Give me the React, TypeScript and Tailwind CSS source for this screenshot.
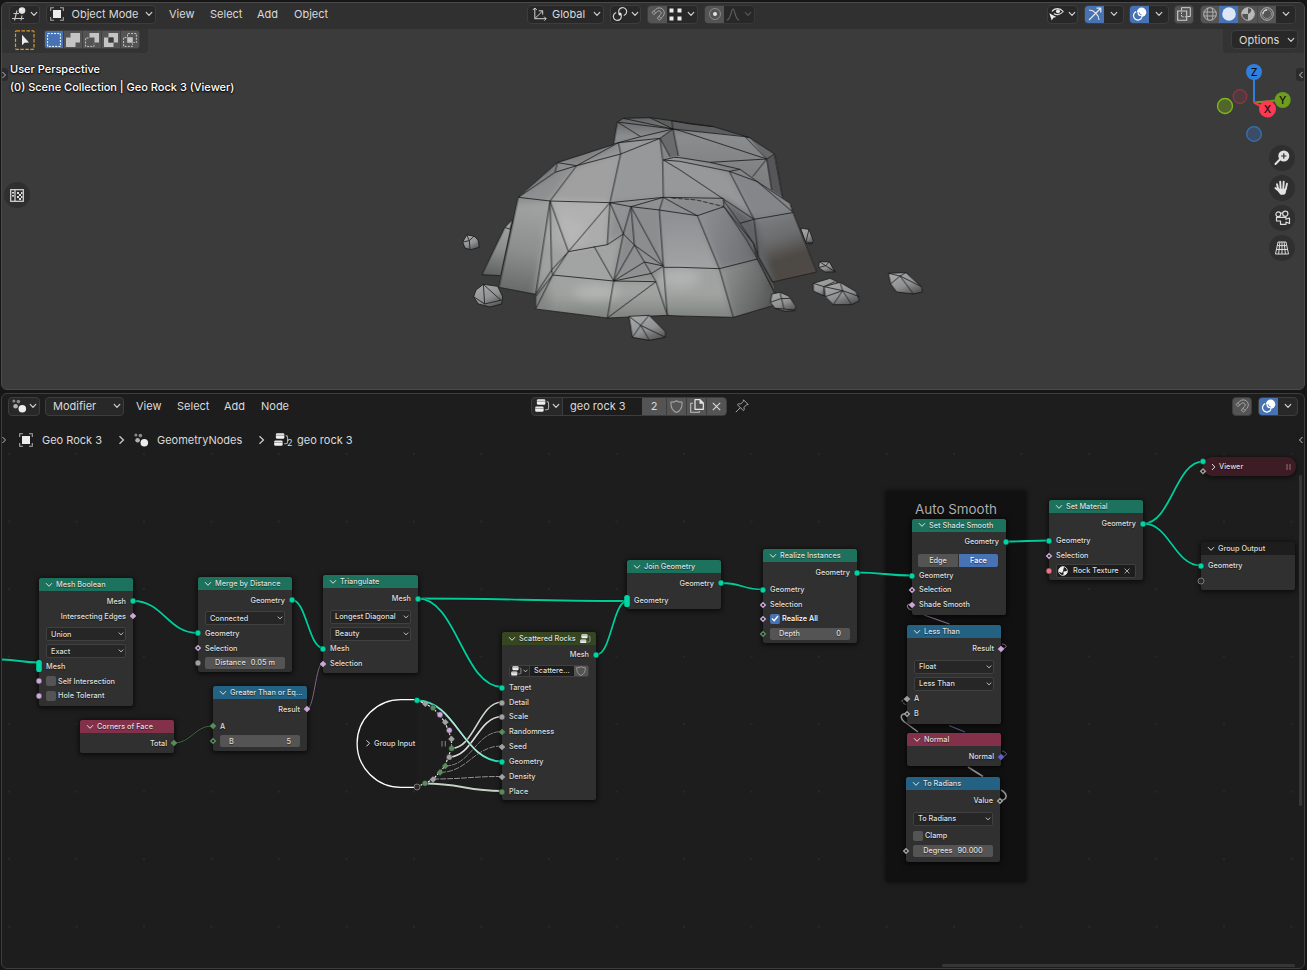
import React from "react";

type Kids = { children?: React.ReactNode };

/* ---------- small icons ---------- */

function Svg({ w = 16, h = 16, vb, className = "", children }: Kids & { w?: number; h?: number; vb?: string; className?: string }) {
  return (
    <svg width={w} height={h} viewBox={vb ?? `0 0 ${w} ${h}`} fill="none" className={`shrink-0 ${className}`}>
      {children}
    </svg>
  );
}

const Chevron = ({ color = "#d0d0d0" }: { color?: string }) => (
  <Svg w={8} h={6}>
    <path d="M1.200 1.400 4 4.300 6.800 1.400" stroke={color} strokeWidth="1.200" strokeLinecap="round" strokeLinejoin="round" />
  </Svg>
);

const Viewport3DIcon = () => (
  <Svg>
    <path d="M2.500 7.500H8M1 12.500H13M6 4.500 3.500 14.500M11 9.500 10 14.500" stroke="#c4c4c4" strokeWidth="1.100" />
    <circle cx="11" cy="4.600" r="3.300" fill="#e4e4e4" />
    <circle cx="9.900" cy="3.500" r="1" fill="#fff" />
  </Svg>
);

const ObjectIcon = () => (
  <Svg w={14} h={14}>
    <path d="M4 .7H.7V4M10 .7h3.300V4M4 13.300H.7V10M10 13.300h3.300V10" stroke="#a8a8a8" strokeWidth="1.100" />
    <rect x="3" y="3" width="8" height="8" fill="#ececec" />
  </Svg>
);

const NodesIcon = () => (
  <Svg w={15} h={14}>
    <circle cx="10.300" cy="9.800" r="3.800" fill="#ececec" />
    <circle cx="3.600" cy="7.200" r="2.300" fill="#b0b0b0" />
    <circle cx="1.900" cy="2.100" r="1.500" fill="#8a8a8a" />
    <circle cx="6.400" cy="2.600" r="1.800" fill="#8a8a8a" />
  </Svg>
);

const TreeIcon = ({ w = 16 }: { w?: number }) => (
  <Svg w={w} h={(w * 14) / 16} vb="0 0 16 14">
    <rect x="2" y=".3" width="9" height="5.800" rx="1.400" fill="#f0f0f0" />
    <path d="M2 2.400h9" stroke="#555" strokeWidth=".6" />
    <rect x=".2" y="7.900" width="9" height="5.800" rx="1.400" fill="#f0f0f0" />
    <path d="M.2 10h9" stroke="#555" strokeWidth=".6" />
    <path d="M12.500 2.800a2 2 0 0 1 2 2v4.700a2 2 0 0 1-2 2H10.800" stroke="#b0b0b0" strokeWidth="1.100" />
  </Svg>
);

const MagnetIcon = () => (
  <Svg w={14} h={14}>
    <path d="M1 5.400 4.600 2.400a5 5 0 0 1 7.300 7L8.500 13.200 6.200 11.200 9.700 7.400a2.200 2.200 0 0 0-3.200-3L2.900 7.600Z" stroke="#a4a4a4" strokeWidth="1" strokeLinejoin="round" />
    <path d="M2.800 3.900 4.800 6M8 9.300l2.300 2" stroke="#a4a4a4" strokeWidth=".9" />
  </Svg>
);

const OverlayIcon = () => (
  <Svg w={15} h={14}>
    <circle cx="9.600" cy="5.200" r="4.700" fill="#fff" />
    <path d="M4.200 4.600a4.400 4.400 0 1 0 5.800 5.700" stroke="#fff" strokeWidth="1.200" />
    <path d="M5.200 5.300a3 3 0 0 0 4 4" stroke="#4772b3" strokeWidth="1" />
    <path d="M7 5.200a2.600 2.600 0 0 0 2.600 2.600" stroke="#4772b3" strokeWidth=".8" />
  </Svg>
);

const ShieldIcon = ({ s = 13 }: { s?: number }) => (
  <Svg w={s} h={s} vb="0 0 13 13">
    <path d="M6.500.7C5 1.900 3 2.200.9 2.100.7 7.500 2.700 11 6.500 12.400c3.800-1.400 5.800-4.900 5.600-10.300C10 2.200 8 1.900 6.500.7Z" stroke="#a0a0a0" strokeWidth="1.100" strokeLinejoin="round" />
  </Svg>
);

/* ---------- header pieces ---------- */

const Btn = ({ className = "", children }: Kids & { className?: string }) => (
  <div className={`flex h-[19px] shrink-0 items-center overflow-hidden rounded-[4px] border border-[#3d3d3d] bg-[#282828] ${className}`}>{children}</div>
);

const Cell = ({ className = "", children }: Kids & { className?: string }) => (
  <div className={`flex h-full items-center justify-center ${className}`}>{children}</div>
);

/* ---------- nodes ---------- */

const TEAL = "#00d6a3";
const PINK = "#cca6d6";
const GREEN = "#598c5c";
const GREY = "#a1a1a1";

type Shape = "circle" | "diamond" | "dot" | "pill" | "empty";

function SocketShape({ x, y, kind, color }: { x: number; y: number; kind: Shape; color: string }) {
  if (kind === "circle") return <circle cx={x} cy={y} r="2.900" fill={color} stroke="#111" strokeWidth=".4" />;
  if (kind === "empty") return <circle cx={x} cy={y} r="3" fill="#2a2a2a" stroke="#8a8a8a" strokeWidth=".8" />;
  if (kind === "pill") return <rect x={x - 2.8} y={y - 6} width="5.600" height="12" rx="2.600" fill={color} />;
  const d = `M${x} ${y - 3.3}L${x + 3.3} ${y}L${x} ${y + 3.3}L${x - 3.3} ${y}Z`;
  return (
    <g>
      <path d={d} fill={color} />
      {kind === "dot" && <circle cx={x} cy={y} r="1.100" fill="#1a1a1a" />}
    </g>
  );
}

function Row({ mt = "mt-[1px]", right, kind, color = GREY, children }: Kids & { mt?: string; right?: boolean; kind?: Shape; color?: string }) {
  return (
    <div className={`relative flex h-[14px] items-center px-[7px] ${right ? "justify-end" : ""} ${mt}`}>
      {kind && (
        <svg width="10" height="14" viewBox="0 0 10 14" className={`absolute top-0 ${right ? "-right-[5px]" : "-left-[5px]"}`}>
          <SocketShape x={5} y={7} kind={kind} color={color} />
        </svg>
      )}
      {children}
    </div>
  );
}

const Menu = ({ mt = "mt-[3px]", label }: { mt?: string; label: string }) => (
  <Row mt={mt}>
    <div className="flex h-[14px] w-full items-center justify-between rounded-[2px] border border-[#404040] bg-[#262626] pr-[1px] pl-[4px]">
      <span>{label}</span>
      <Svg w={6} h={4}>
        <path d="M.8.6 3 2.900 5.200.6" stroke="#d0d0d0" strokeWidth=".9" />
      </Svg>
    </div>
  </Row>
);

const Num = ({ mt, label, value, kind, color, tight }: { mt?: string; label: string; value: string; kind: Shape; color?: string; tight?: boolean }) => (
  <Row mt={mt} kind={kind} color={color}>
    <div className={`flex h-[12px] w-full items-center rounded-[2px] bg-[#545454] px-[9px] ${tight ? "justify-center gap-[5px]" : "justify-between"}`}>
      <span>{label}</span>
      <span>{value}</span>
    </div>
  </Row>
);

const Check = ({ mt, label, kind, on, color = PINK }: { mt?: string; label: string; kind?: Shape; on?: boolean; color?: string }) => (
  <Row mt={mt} kind={kind} color={color}>
    <div className={`mr-[2px] flex size-[10px] items-center justify-center rounded-[2px] ${on ? "bg-[#4772b3]" : "bg-[#545454]"}`}>
      {on && (
        <Svg w={8} h={7}>
          <path d="M1 3.500 3.200 5.700 7 1" stroke="#fff" strokeWidth="1.300" />
        </Svg>
      )}
    </div>
    <span className={on ? "text-white" : ""}>{label}</span>
  </Row>
);

function Node({ pos, head, title, extra, children }: Kids & { pos: string; head: string; title: string; extra?: React.ReactNode }) {
  return (
    <div className={`absolute w-[94px] rounded-[2.500px] bg-[#303030] shadow-[0_1px_5px_1px_rgba(0,0,0,.65)] ${pos}`}>
      <div className={`flex h-[13px] items-center rounded-t-[2.500px] pr-[5px] pl-[6px] ${head}`}>
        <Svg w={8} h={6} className="mr-[3px]">
          <path d="M1 1.200 4 4.300 7 1.200" stroke="#e0e0e0" strokeWidth="1" />
        </Svg>
        <span className="grow">{title}</span>
        {extra}
      </div>
      {children}
    </div>
  );
}

const GEO = "bg-[#1d725e]";
const MATH = "bg-[#246283]";
const INPUT = "bg-[#83314a]";

/* ---------- links ---------- */

type L = { a: [number, number]; b: [number, number]; c?: string; w?: number; dash?: string };
const links: L[] = [
  { a: [0, 659.5], b: [39, 662.5] },
  { a: [133.5, 601], b: [197.5, 633] },
  { a: [292, 600], b: [323, 648] },
  { a: [307, 709], b: [323, 663], c: "#92759b", w: 0.9 },
  { a: [174, 743], b: [212, 726], c: "#4a734d", w: 0.9 },
  { a: [418, 598.5], b: [627, 601] },
  { a: [418, 598.5], b: [502, 687] },
  { a: [597, 654.5], b: [627, 601] },
  { a: [721.5, 583], b: [763, 589.5] },
  { a: [857.5, 572.5], b: [911.5, 575.5] },
  { a: [1006, 541.5], b: [1048.5, 540.5] },
  { a: [1143.5, 523.5], b: [1203, 461.5] },
  { a: [1143.5, 523.5], b: [1200.5, 565.5] },
  { a: [451.5, 748.3], b: [502, 702], c: "#ccd6cc", w: 1.7 },
  { a: [449, 757], b: [502, 716.5], c: "#dcdcdc", w: 1.7 },
  { a: [445, 766], b: [502, 731.5], c: "#8d988d", w: 0.9, dash: "6 .7" },
  { a: [440, 772.3], b: [502, 746], c: "#939b93", w: 0.9, dash: "6 1" },
  { a: [433, 779], b: [502, 776.5], c: "#a8a8a8", w: 0.9, dash: "6 1" },
  { a: [425, 783.5], b: [502, 791], c: "#c4d4c4", w: 1.8 },
  { a: [417, 700.5], b: [502, 761.5], c: "url(#sel)", w: 1.8 },
];

const Links = () => (
  <svg width="1307" height="970" viewBox="0 0 1307 970" className="absolute top-0 left-0" fill="none">
    <defs>
      <linearGradient id="sel" gradientUnits="userSpaceOnUse" x1="417" y1="700" x2="502" y2="761">
        <stop offset="0" stopColor={TEAL} />
        <stop offset=".3" stopColor="#a9eadb" />
        <stop offset=".75" stopColor="#a9eadb" />
        <stop offset="1" stopColor={TEAL} />
      </linearGradient>
    </defs>
    {links.map((l, i) => {
      const k = Math.abs(l.b[0] - l.a[0]) * 0.46;
      const d = `M${l.a[0]} ${l.a[1]}C${l.a[0] + k} ${l.a[1]} ${l.b[0] - k} ${l.b[1]} ${l.b[0]} ${l.b[1]}`;
      return (
        <g key={i}>
          <path d={d} stroke="#111" strokeOpacity=".6" strokeWidth={(l.w ?? 1.8) + 1} />
          <path d={d} stroke={l.c ?? "#00cb9b"} strokeWidth={l.w ?? 1.8} strokeDasharray={l.dash} />
        </g>
      );
    })}
    <path d="M911 604C905 604 907 609 912 610M924 615 949.500 624" stroke="#92759b" strokeWidth="1.100" />
    <path d="M1002 644C1006 644 1009 648 1002 648.500" stroke="#92759b" strokeWidth="1" />
    <path d="M907 698.500C900 699 901 703 907 705" stroke="#858585" strokeWidth=".9" strokeDasharray="3 1" />
    <path d="M949 725.500 965 732" stroke="#5f5f99" strokeWidth="1.100" />
    <path d="M1002 751C1007 752 1009 756 1001 756.500" stroke="#5f5f99" strokeWidth="1" />
    <path d="M907 713.500C899 713.500 900 719 906 723L918 732M968 767 983 776.500M1001 790C1008 794 1008 800 1000 800.500" stroke="#9a9a9a" strokeWidth="1.500" />
  </svg>
);

const groupSockets: [number, number, Shape, string][] = [
  [417, 700.3, "circle", TEAL],
  [425.3, 703.8, "diamond", GREY],
  [433, 707.8, "circle", GREEN],
  [440, 714.7, "circle", PINK],
  [445.3, 722.3, "diamond", GREY],
  [449.3, 730.3, "circle", PINK],
  [451.5, 739, "diamond", GREY],
  [451.6, 748.4, "circle", GREEN],
  [449.3, 757.2, "circle", GREY],
  [445.3, 766, "diamond", GREEN],
  [440, 772.4, "diamond", GREEN],
  [433, 779.5, "diamond", GREY],
  [425, 783.3, "circle", GREEN],
  [417, 787, "empty", GREY],
];

function GroupInput() {
  return (
    <>
      <svg width="110" height="100" viewBox="350 693 110 100" className="absolute top-[693px] left-[350px]" fill="none">
        <path d="M417 699.600H401A43.900 43.900 0 0 0 401 787.400H417" fill="#1b1b1b" stroke="#fff" strokeWidth="1.300" />
        <path d="M417 700 433 707.800 445 722 451.500 739 451.500 748 445 766 433 779.500 417 787" stroke="#f4f4f4" strokeWidth="1.100" strokeDasharray="2.500 1.500" />
        <path d="M442 741v5.500M445.300 741v5.500" stroke="#777" strokeWidth="1.200" />
        <path d="m366.500 740.300 3 3-3 3" stroke="#e0e0e0" strokeWidth="1" />
        {groupSockets.map(([x, y, k, c], i) => (
          <SocketShape key={i} x={x} y={y} kind={k} color={c} />
        ))}
      </svg>
      <span className="absolute top-[738px] left-[374px]">Group Input</span>
    </>
  );
}

function NodeCanvas() {
  return (
    <div className="absolute -top-[394px] -left-[2px] h-[970px] w-[1307px] text-[7.300px] leading-[11px] font-medium whitespace-nowrap text-[#dedede] [text-shadow:0_1px_1px_rgba(0,0,0,.5)]">
      <svg width="1307" height="970" className="absolute top-0 left-0">
        <defs>
          <pattern id="dots" x="-24.700" y="420.300" width="67.500" height="67.500" patternUnits="userSpaceOnUse">
            <circle cx="33.700" cy="33.700" r="1" fill="#2b2b2b" />
          </pattern>
        </defs>
        <rect y="420" width="1307" height="550" fill="url(#dots)" />
      </svg>

      <div className="absolute top-[491px] left-[886px] h-[391px] w-[140px] rounded-[2px] bg-[#111] pt-[9px] text-center text-[13.400px] leading-[18px] font-normal text-[#aeaeae] shadow-[0_0_4px_1px_rgba(0,0,0,.5)]">
        Auto Smooth
      </div>

      <Links />

      <Node pos="left-[39px] top-[578px] h-[128px]" head={GEO} title="Mesh Boolean">
        <Row mt="mt-[3px]" right kind="circle" color={TEAL}>Mesh</Row>
        <Row right kind="diamond" color={PINK}>Intersecting Edges</Row>
        <Menu mt="mt-[4px]" label="Union" />
        <Menu label="Exact" />
        <Row kind="pill" color={TEAL}>Mesh</Row>
        <Check kind="circle" label="Self Intersection" />
        <Check mt="mt-[0.500px]" kind="circle" label="Hole Tolerant" />
      </Node>

      <Node pos="left-[198px] top-[577px] h-[95px]" head={GEO} title="Merge by Distance">
        <Row mt="mt-[3px]" right kind="circle" color={TEAL}>Geometry</Row>
        <Menu mt="mt-[4px]" label="Connected" />
        <Row kind="circle" color={TEAL}>Geometry</Row>
        <Row kind="dot" color={PINK}>Selection</Row>
        <Num mt="mt-[0.500px]" tight kind="circle" label="Distance" value="0.05 m" />
      </Node>

      <Node pos="left-[213px] top-[686px] h-[65px]" head={MATH} title="Greater Than or Eq...">
        <Row mt="mt-[3px]" right kind="diamond" color={PINK}>Result</Row>
        <Row mt="mt-[3px]" kind="diamond" color={GREEN}>A</Row>
        <Num kind="dot" color={GREEN} label="B" value="5" />
      </Node>

      <Node pos="left-[80px] top-[720px] h-[33px]" head={INPUT} title="Corners of Face">
        <Row mt="mt-[3px]" right kind="diamond" color={GREEN}>Total</Row>
      </Node>

      <Node pos="left-[323px] top-[575px] h-[98px] w-[95px]" head={GEO} title="Triangulate">
        <Row mt="mt-[3.500px]" right kind="circle" color={TEAL}>Mesh</Row>
        <Menu mt="mt-[4px]" label="Longest Diagonal" />
        <Menu label="Beauty" />
        <Row kind="circle" color={TEAL}>Mesh</Row>
        <Row kind="diamond" color={PINK}>Selection</Row>
      </Node>

      <GroupInput />

      <Node pos="left-[502px] top-[632px] h-[168px]" head="bg-[#354621]" title="Scattered Rocks" extra={<TreeIcon w={11} />}>
        <Row mt="mt-[2.500px]" right kind="circle" color={TEAL}>Mesh</Row>
        <Row mt="mt-[2.500px]">
          <div className="flex h-[12px] w-full items-stretch overflow-hidden rounded-[2px] border border-[#404040] bg-[#1d1d1d]">
            <div className="flex w-[20px] items-center justify-center gap-[1px] border-r border-[#404040] bg-[#262626]">
              <TreeIcon w={11} />
              <Svg w={5} h={4}>
                <path d="M.6.8 2.500 2.800 4.400.8" stroke="#d0d0d0" strokeWidth=".9" />
              </Svg>
            </div>
            <span className="grow pl-[4px] leading-[10px]">Scattere...</span>
            <div className="flex w-[14px] items-center justify-center bg-[#545454]">
              <ShieldIcon s={10} />
            </div>
          </div>
        </Row>
        <Row mt="mt-[2.500px]" kind="circle" color={TEAL}>Target</Row>
        <Row kind="circle">Detail</Row>
        <Row mt="mt-0" kind="circle">Scale</Row>
        <Row kind="diamond" color={GREEN}>Randomness</Row>
        <Row kind="diamond">Seed</Row>
        <Row kind="circle" color={TEAL}>Geometry</Row>
        <Row kind="diamond">Density</Row>
        <Row kind="circle" color={GREEN}>Place</Row>
      </Node>

      <Node pos="left-[627px] top-[560px] h-[49px]" head={GEO} title="Join Geometry">
        <Row mt="mt-[3px]" right kind="circle" color={TEAL}>Geometry</Row>
        <Row mt="mt-[3.500px]" kind="pill" color={TEAL}>Geometry</Row>
      </Node>

      <Node pos="left-[763px] top-[549px] h-[94px]" head={GEO} title="Realize Instances">
        <Row mt="mt-[3.500px]" right kind="circle" color={TEAL}>Geometry</Row>
        <Row mt="mt-[3px]" kind="circle" color={TEAL}>Geometry</Row>
        <Row kind="dot" color={PINK}>Selection</Row>
        <Check mt="mt-0" on kind="dot" label="Realize All" />
        <Num kind="dot" color={GREEN} label="Depth" value="0" />
      </Node>

      <Node pos="left-[912px] top-[518.500px] h-[96px]" head={GEO} title="Set Shade Smooth">
        <Row mt="mt-[3px]" right kind="circle" color={TEAL}>Geometry</Row>
        <Row mt="mt-[4.500px]">
          <div className="-ml-[1px] flex h-[13px] w-full overflow-hidden rounded-[2px] text-center leading-[13px]">
            <span className="w-1/2 bg-[#545454]">Edge</span>
            <span className="w-1/2 border-l border-[#303030] bg-[#4772b3] text-white">Face</span>
          </div>
        </Row>
        <Row mt="mt-[1.500px]" kind="circle" color={TEAL}>Geometry</Row>
        <Row mt="mt-0" kind="dot" color={PINK}>Selection</Row>
        <Row kind="diamond" color={PINK}>Shade Smooth</Row>
      </Node>

      <Node pos="left-[907px] top-[625px] h-[99px]" head={MATH} title="Less Than">
        <Row mt="mt-[3.500px]" right kind="diamond" color={PINK}>Result</Row>
        <Menu mt="mt-[4px]" label="Float" />
        <Menu label="Less Than" />
        <Row kind="diamond">A</Row>
        <Row kind="dot">B</Row>
      </Node>

      <Node pos="left-[907px] top-[733px] h-[33px]" head={INPUT} title="Normal">
        <Row mt="mt-[3.500px]" right kind="diamond" color="#6363c7">Normal</Row>
      </Node>

      <Node pos="left-[906px] top-[777px] h-[85px]" head={MATH} title="To Radians">
        <Row mt="mt-[3.500px]" right kind="dot">Value</Row>
        <Menu mt="mt-[4px]" label="To Radians" />
        <Check mt="mt-[3px]" label="Clamp" />
        <Num tight kind="dot" label="Degrees" value="90.000" />
      </Node>

      <Node pos="left-[1049px] top-[500px] h-[80px]" head={GEO} title="Set Material">
        <Row mt="mt-[3.500px]" right kind="circle" color={TEAL}>Geometry</Row>
        <Row mt="mt-[3px]" kind="circle" color={TEAL}>Geometry</Row>
        <Row kind="dot" color={PINK}>Selection</Row>
        <Row kind="circle" color="#eb7582">
          <div className="flex h-[14px] w-full items-center rounded-[2px] border border-[#404040] bg-[#1d1d1d] pr-[5px] pl-[1px]">
            <Svg w={10} h={10}>
              <circle cx="5" cy="5" r="4.400" fill="#1d1d1d" stroke="#eee" strokeWidth=".8" />
              <path d="M5 5 6 .8A4.300 4.300 0 0 0 .7 5.500L4 7ZM5.500 5.500v3.800A4.300 4.300 0 0 0 9.300 5Z" fill="#f0f0f0" />
            </Svg>
            <span className="grow pl-[5px]">Rock Texture</span>
            <Svg w={6} h={6}>
              <path d="m.6.6 4.800 4.800M5.400.6.600 5.400" stroke="#ccc" strokeWidth=".8" />
            </Svg>
          </div>
        </Row>
      </Node>

      <div className="absolute top-[457px] left-[1203px] flex h-[19px] w-[93px] items-center rounded-[9px] bg-[#3e1c25] pr-[5px] pl-[8px] shadow-[0_1px_4px_1px_rgba(0,0,0,.5)]">
        <Svg w={5} h={8}>
          <path d="m1 1 2.800 3L1 7" stroke="#e0e0e0" strokeWidth="1" />
        </Svg>
        <span className="grow pl-[3px]">Viewer</span>
        <Svg w={5} h={6}>
          <path d="M1 0v6M4 0v6" stroke="#8a6c74" strokeWidth="1.100" />
        </Svg>
      </div>
      <svg width="12" height="20" viewBox="1197 456 12 20" className="absolute top-[456px] left-[1197px]">
        <SocketShape x={1203} y={461.5} kind="circle" color={TEAL} />
        <SocketShape x={1203} y={471.3} kind="dot" color={GREY} />
      </svg>

      <Node pos="left-[1201px] top-[542px] h-[48px]" head="bg-[#1d1d1d]" title="Group Output">
        <Row mt="mt-[3.500px]" kind="circle" color={TEAL}>Geometry</Row>
        <Row kind="empty" />
      </Node>

      <div className="absolute top-[475px] left-[1299px] h-[331px] w-[3px] rounded-full bg-[#363636]" />
      <div className="absolute top-[964px] left-[942px] h-[3px] w-[353px] rounded-full bg-[#363636]" />
    </div>
  );
}

/* ---------- rock mesh (drawn at triple scale) ---------- */

const wire = [
  "491,102 502,36 520,25 600,23 665,32 790,50 898,83 973,132 997,260",
  "502,36 669,57 572,80 502,36", "520,25 669,57", "600,23 669,57", "665,32 669,57", "665,32 720,42 790,50",
  "491,102 505,98 572,80", "505,98 630,85 669,57", "630,85 660,140", "669,57 685,138", "669,57 885,80 898,83",
  "669,57 690,62 950,147 973,132", "885,80 950,147", "780,157 950,147 908,200", "950,147 965,240",
  "205,262 322,158 490,104", "322,158 380,167 505,98", "205,262 315,187 380,167 512,132 630,85", "322,158 315,187",
  "380,167 300,273", "505,98 512,132 480,278", "205,262 300,273 480,278 640,262 820,265 822,290",
  "630,85 638,150 640,262", "640,150 672,142 690,143 780,157 870,178 922,215 1020,280 1028,306 1100,486 967,516",
  "640,150 690,154 838,184 870,178", "838,184 922,215", "640,150 690,180 820,267 912,328 838,184", "922,215 1028,306",
  "912,328 1028,308", "912,328 925,440 967,516", "912,328 870,340",
  "480,278 543,290 628,300 742,317 822,290", "543,290 640,262 628,300", "640,262 690,290 742,317",
  "742,317 808,476 850,622", "808,476 922,447", "640,472 690,472 808,476",
  "822,290 910,400 922,447 975,550", "820,270 870,340 912,402 925,440 970,520", "822,290 890,390 930,460 975,550",
  "300,273 355,425 480,278 472,404", "300,273 305,480", "300,273 257,553", "355,425 472,404 520,372 480,278",
  "355,425 305,480 257,553 257,597", "355,425 308,495 257,597", "305,480 308,495 257,560", "432,409 491,513",
  "308,495 491,513 618,515", "491,513 520,372 543,290", "520,372 553,405 640,468", "543,290 553,405", "543,290 640,468",
  "553,405 491,513 583,456 640,468", "553,405 583,456 618,515", "491,513 605,490 640,468", "491,513 472,624 618,515 652,616",
  "628,300 640,468 652,616", "205,262 147,532 257,553", "257,597 472,624 652,616 690,618 850,622 965,588",
  "96,494 165,352 188,328 180,358 165,352", "96,494 150,497",
];

const front = "205,262 322,158 490,104 630,85 640,150 672,142 690,143 870,178 922,215 1020,280 1028,306 1100,486 967,516 975,550 965,588 850,622 690,618 652,616 472,624 257,597 257,553 147,532";

const faces: [string, string][] = [
  ["185,258 300,273 257,575 120,552", "url(#fl)"],
  ["205,262 322,158 380,167 300,273 195,280", "#8e8f90"],
  ["380,167 512,132 480,278 300,273", "#a0a0a1"],
  ["190,262 318,140 315,187", "#77787a"],
  ["318,140 490,85 505,98 380,167", "#808183"],
  ["512,132 505,85 630,65 640,262 480,278", "#97989a"],
  ["640,130 838,184 912,328 820,265 640,262", "#97989a"],
  ["690,125 870,160 838,184", "#77797b"],
  ["838,184 870,160 945,205 1050,296 1028,306 912,328", "#84868a"],
  ["300,273 480,278 355,425", "#b1b1b1"],
  ["300,273 355,425 305,480 257,553", "#a0a1a1"],
  ["480,278 472,404 355,425", "#acacac"],
  ["355,425 472,404 520,372 491,513 308,495", "#a2a3a3"],
  ["480,278 543,290 520,372", "#929395"],
  ["543,290 553,405 491,513 520,372", "#88898b"],
  ["543,290 628,300 640,468 553,405", "#8b8d8f"],
  ["491,513 553,405 640,468 618,515", "#8e9091"],
  ["480,278 640,262 742,317 543,290", "#8e9092"],
  ["640,262 820,265 822,290 742,317", "#8a8b8d"],
  ["628,300 742,317 808,476 640,468", "url(#fm)"],
  ["742,317 822,290 922,447 808,476", "url(#fr)"],
  ["308,495 491,513 618,515 640,470 808,476 855,645 652,645 472,650 235,625", "url(#fb)"],
  ["808,476 922,447 995,550 985,610 855,645", "url(#fe)"],
  ["912,328 1050,300 1130,500 955,540", "url(#fd)"],
  ["820,267 912,328 967,516 975,550 922,447", "#616365"],
];

const pebbles: { o: string; w: string[] }[] = [
  { o: "50,375 72,378 84,390 88,412 62,419 45,414 38,396", w: ["50,375 58,392 60,419", "38,396 58,392 72,378"] },
  { o: "100,523 143,529 158,560 155,582 120,591 85,582 71,560 78,540", w: ["100,523 104,582", "71,560 104,582 155,570", "100,523 152,570"] },
  { o: "537,619 597,616 646,665 646,682 598,691 547,682", w: ["537,619 572,646 597,616", "572,646 547,682", "572,646 646,682", "572,646 598,691"] },
  { o: "1052,355 1077,358 1090,392 1085,402 1068,400", w: ["1077,358 1068,395 1088,400"] },
  { o: "1108,455 1138,456 1156,486 1125,486 1106,473", w: ["1108,455 1127,467 1138,456", "1106,473 1127,467 1156,486"] },
  { o: "1090,520 1140,505 1160,514 1160,550 1120,557 1090,543", w: ["1090,520 1122,530 1155,515", "1122,530 1120,557"] },
  { o: "1122,530 1170,517 1218,545 1228,572 1205,584 1150,584 1126,560", w: ["1122,530 1178,542 1170,517", "1126,560 1178,542 1205,584", "1178,542 1150,584", "1178,542 1228,560"] },
  { o: "1315,490 1368,488 1414,530 1417,546 1390,552 1340,546 1322,522", w: ["1322,522 1350,498 1368,488", "1315,490 1350,498 1414,530", "1350,498 1390,552"] },
  { o: "966,552 990,547 1016,558 1038,590 1034,602 1005,604 975,595 961,577", w: ["990,547 1002,597 1034,600", "961,577 992,566 1020,565", "975,595 1002,597"] },
];

const Pebbles = ({ list }: { list: typeof pebbles }) => (
  <g stroke="#161616" strokeWidth="2.400" strokeLinejoin="round">
    {list.map((p) => (
      <g key={p.o}>
        <polygon points={p.o} fill="url(#peb)" />
        {p.w.map((s) => (
          <polyline key={s} points={s} />
        ))}
      </g>
    ))}
  </g>
);

const Rock = () => (
  <svg width="490" height="240" viewBox="0 0 1470 720" className="absolute top-[107px] left-[448px]" fill="none">
    <defs>
      <linearGradient id="back" x1="0" y1="0" x2="0" y2="1">
        <stop offset="0" stopColor="#626365" />
        <stop offset=".2" stopColor="#8b8c8e" />
        <stop offset="1" stopColor="#747678" />
      </linearGradient>
      <linearGradient id="fl" x1=".3" y1="0" x2=".2" y2="1">
        <stop offset="0" stopColor="#a3a4a4" />
        <stop offset=".5" stopColor="#8c8e8d" />
        <stop offset="1" stopColor="#5d6060" />
      </linearGradient>
      <linearGradient id="fm" x1="0" y1="0" x2="0" y2="1">
        <stop offset="0" stopColor="#8d8e91" />
        <stop offset="1" stopColor="#a2a4a5" />
      </linearGradient>
      <linearGradient id="fr" x1="0" y1=".3" x2="1" y2=".5">
        <stop offset="0" stopColor="#8d8f92" />
        <stop offset="1" stopColor="#6c6f73" />
      </linearGradient>
      <linearGradient id="fb" x1="0" y1="0" x2="0" y2="1">
        <stop offset="0" stopColor="#a1a3a2" />
        <stop offset=".45" stopColor="#a1a4a2" />
        <stop offset="1" stopColor="#737774" />
      </linearGradient>
      <linearGradient id="fe" x1="0" y1=".3" x2="1" y2=".7">
        <stop offset="0" stopColor="#8d908f" />
        <stop offset=".6" stopColor="#686a69" />
        <stop offset="1" stopColor="#4b4a49" />
      </linearGradient>
      <linearGradient id="fd" x1=".3" y1="0" x2=".6" y2="1">
        <stop offset="0" stopColor="#7c7e81" />
        <stop offset=".35" stopColor="#6a6b6c" />
        <stop offset=".6" stopColor="#4c4743" />
        <stop offset="1" stopColor="#544c47" />
      </linearGradient>
      <linearGradient id="peb" x1=".2" y1="0" x2=".8" y2="1">
        <stop offset="0" stopColor="#a8a9aa" />
        <stop offset=".55" stopColor="#909293" />
        <stop offset="1" stopColor="#505152" />
      </linearGradient>
      <filter id="soft" x="-50%" y="-50%" width="200%" height="200%">
        <feGaussianBlur stdDeviation="16" />
      </filter>
      <filter id="melt">
        <feGaussianBlur stdDeviation="9" />
      </filter>
      <clipPath id="fc">
        <polygon points={front} />
      </clipPath>
    </defs>
    <polygon points="96,494 165,352 188,328 180,358 150,497" fill="url(#fl)" />
    <Pebbles list={[...pebbles.slice(0, 2), ...pebbles.slice(3, 5)]} />
    <polygon points="491,102 502,36 520,25 600,23 665,32 790,50 898,83 973,132 997,260 900,300 600,200" fill="url(#back)" />
    <polygon points="950,147 973,132 997,260 965,240" fill="#565558" />
    <polygon points="669,57 685,138 660,140 630,85" fill="#696b6d" />
    <polygon points="898,83 973,132 950,147" fill="#68696b" />
    <polygon points="600,23 665,32 790,50 880,78 669,57" fill="#5d5e60" />
    <polygon points={front} fill="#8d8f90" />
    <g clipPath="url(#fc)">
      <g filter="url(#melt)">
        {faces.map(([p, f]) => (
          <polygon key={p} points={p} fill={f} stroke={f.startsWith("#") ? f : "none"} strokeWidth="4" />
        ))}
      </g>
      <g filter="url(#soft)">
        <ellipse cx="440" cy="548" rx="70" ry="20" fill="#c4c6c5" opacity=".6" />
        <ellipse cx="690" cy="505" rx="60" ry="28" fill="#c0c2c2" opacity=".55" />
        <ellipse cx="350" cy="370" rx="60" ry="50" fill="#c0c0c0" opacity=".35" />
        <ellipse cx="275" cy="570" rx="24" ry="50" fill="#707372" opacity=".5" />
      </g>
    </g>
    <g stroke="#161616" strokeWidth="2.400" strokeLinejoin="round">
      {wire.map((s) => (
        <polyline key={s} points={s} />
      ))}
      <path d="M665 264 740 270 822 290" strokeDasharray="14 5" />
    </g>
    <Pebbles list={[pebbles[2], ...pebbles.slice(5)]} />
  </svg>
);

const AxisGizmo = () => (
  <svg width="84" height="84" viewBox="1212 60 84 84" className="absolute top-[57px] left-[1210px]">
    <circle cx="1240" cy="96.500" r="6.800" fill="#4f3a3e" stroke="#953546" strokeWidth="1.200" />
    <path d="M1254 102.500 1283 100" stroke="#6e9c1e" strokeWidth="2" />
    <path d="M1254 102.500V72" stroke="#2f80de" strokeWidth="2" />
    <path d="m1254 102.500 13 7" stroke="#f5364f" strokeWidth="2" />
    <circle cx="1225" cy="106" r="7.500" fill="#51662a" stroke="#80b81b" strokeWidth="1.300" />
    <circle cx="1254" cy="134" r="7.300" fill="#3b4d66" stroke="#3873b8" strokeWidth="1.300" />
    <circle cx="1282.700" cy="100" r="8" fill="#6e9c1e" />
    <circle cx="1254" cy="72" r="8" fill="#2f80de" />
    <circle cx="1267.500" cy="109" r="8.500" fill="#ff3853" />
    <g fill="#101010" className="text-[10.500px] font-medium" textAnchor="middle">
      <text x="1254" y="75.800">Z</text>
      <text x="1282.700" y="103.800">Y</text>
      <text x="1267.500" y="112.900">X</text>
    </g>
  </svg>
);

const Round = ({ children }: Kids) => <div className="flex size-[26px] items-center justify-center rounded-full bg-[#2f2f2f]">{children}</div>;

const NavButtons = () => (
  <div className="absolute top-[142px] left-[1267px] flex flex-col gap-[4px]">
    <Round>
      <Svg>
        <circle cx="9.800" cy="6" r="5.500" fill="#e2e2e2" />
        <path d="M5.600 9.800 1.500 14" stroke="#e2e2e2" strokeWidth="2" strokeLinecap="round" />
        <path d="M9.800 3.300v5.400M7.100 6h5.400" stroke="#2f2f2f" strokeWidth="1.200" />
      </Svg>
    </Round>
    <Round>
      <Svg>
        <path d="M4.200 9 3 4.200M6.600 8 6.200 1.800M9.300 8 9.700 1.600M11.800 9 13 3.600M5 11 1.400 8" stroke="#e2e2e2" strokeWidth="1.900" strokeLinecap="round" />
        <path d="M3.500 8.500h9l-.8 4.500a2.500 2.500 0 0 1-2.300 1.800H7.600C5.500 14.800 4 11.500 3.500 8.500Z" fill="#e2e2e2" />
      </Svg>
    </Round>
    <Round>
      <Svg w={17}>
        <circle cx="4.300" cy="4.300" r="2.400" stroke="#dcdcdc" strokeWidth="1.200" />
        <circle cx="11.300" cy="3.700" r="2.600" stroke="#dcdcdc" strokeWidth="1.200" />
        <path d="M6.500 3.200h2.200M2.500 7.300h9.500v2L15.500 8v5.500L12 12v2.300H6.500V11H2.500Z" stroke="#dcdcdc" strokeWidth="1.200" strokeLinejoin="round" />
      </Svg>
    </Round>
    <Round>
      <Svg>
        <path d="M4 2h8l2.500 12h-13ZM8 2v12M3.300 5.600h9.400M2.500 9.500h11M5.900 2 4.600 14M10.100 2l1.300 12" stroke="#dcdcdc" strokeWidth="1" />
      </Svg>
    </Round>
  </div>
);

/* ---------- headers ---------- */

function ViewportHeader() {
  return (
    <div className="relative flex h-[26px] items-center bg-[#303030] pb-[4px]">
      <Btn className="ml-[7px] w-[31px] justify-center gap-[3px]">
        <Viewport3DIcon />
        <Chevron />
      </Btn>
      <Btn className="ml-[6px] w-[110px] pr-[2px] pl-[3px]">
        <ObjectIcon />
        <span className="grow pl-[7.500px]">Object Mode</span>
        <Chevron />
      </Btn>
      <div className="ml-[13px] w-[41px]">View</div>
      <div className="w-[47px]">Select</div>
      <div className="w-[37px]">Add</div>
      <div className="w-[233px]">Object</div>

      <Btn className="w-[77px] pr-[2px] pl-[4px]">
        <Svg w={15} h={14}>
          <path d="M2.800 1v10.700H14M2.800 11.700 10.500 4M.8 3 2.800 1l2 2M12.200 9.700l2 2-2 2M6.800 3.800h3.900v3.900" stroke="#d0d0d0" strokeWidth="1" />
        </Svg>
        <span className="grow pl-[5px]">Global</span>
        <Chevron />
      </Btn>
      <Btn className="ml-[6px] w-[31px] justify-center gap-[3px]">
        <Svg>
          <path d="M7.300 7.800A4 4 0 1 1 12.200 9.300M8.700 8.200A4 4 0 1 1 3.800 6.700" stroke="#d0d0d0" strokeWidth="1.200" strokeLinecap="round" />
          <circle cx="8" cy="8" r="1.500" fill="#eee" />
        </Svg>
        <Chevron />
      </Btn>
      <Btn className="ml-[6px] w-[51px]">
        <Cell className="w-[19px] bg-[#545454]">
          <MagnetIcon />
        </Cell>
        <Cell className="grow gap-[5px]">
          <Svg w={13} h={13}>
            <path d="M.5.5h4v4h-4ZM8.500.5h4v4h-4ZM.5 8.500h4v4h-4ZM8.500 8.500h4v4h-4Z" fill="#ececec" />
          </Svg>
          <Chevron />
        </Cell>
      </Btn>
      <Btn className="ml-[6px] w-[51px] border-[#383838] bg-[#2c2c2c]">
        <Cell className="w-[19px] bg-[#545454]">
          <Svg w={14} h={14}>
            <circle cx="7" cy="7" r="5.500" stroke="#8a8a8a" strokeWidth="1" />
            <circle cx="7" cy="7" r="2" fill="#e6e6e6" />
          </Svg>
        </Cell>
        <Cell className="grow gap-[4px]">
          <Svg w={14} h={13}>
            <path d="M.8 12C5 12 5 1 7 1s2 11 6.200 11" stroke="#5f5f5f" strokeWidth="1.100" />
          </Svg>
          <Chevron color="#555" />
        </Cell>
      </Btn>

      <div className="grow" />
      <Btn className="w-[31px] justify-center gap-[4px]">
        <Svg w={15} h={14}>
          <path d="M3 4.500C5.500.8 11 .5 14.200 4.500 11 8.500 6.500 8 5 6.500" stroke="#dcdcdc" strokeWidth="1.200" />
          <circle cx="9" cy="4.300" r="2" fill="#e8e8e8" />
          <path d="M.3 6.300 7.300 10 4.300 10.700 2.800 13.600Z" fill="#ececec" />
        </Svg>
        <Chevron />
      </Btn>
      <Btn className="ml-[6px] w-[40px]">
        <Cell className="w-[19px] bg-[#4772b3]">
          <Svg w={14} h={14}>
            <path d="M1 13 12.500 1.500M8.500 1.200h4.300v4.300M1 3C6 3 11 8 11 13" stroke="#e8e8e8" strokeWidth="1.200" />
          </Svg>
        </Cell>
        <Cell className="grow">
          <Chevron />
        </Cell>
      </Btn>
      <Btn className="ml-[5px] w-[40px]">
        <Cell className="w-[19px] bg-[#4772b3]">
          <OverlayIcon />
        </Cell>
        <Cell className="grow">
          <Chevron />
        </Cell>
      </Btn>
      <Btn className="ml-[5px] w-[20px] justify-center bg-[#545454]">
        <Svg w={14} h={14}>
          <path d="M4.500 3.500V.7h8.800v8.800h-3" stroke="#d0d0d0" strokeWidth="1" />
          <path d="M.7 4h9v9.300h-9Z" stroke="#d0d0d0" strokeWidth="1.100" />
          <path d="M4.500 5.500v4.300h4.300" stroke="#d0d0d0" strokeWidth="1" strokeDasharray="1.500 1" />
        </Svg>
      </Btn>
      <Btn className="mr-[8px] ml-[6px] w-[96px]">
        <Cell className="w-[18px] bg-[#545454]">
          <Svg w={14} h={14}>
            <circle cx="7" cy="7" r="6.300" stroke="#b8b8b8" />
            <path d="M.7 5h12.600M.7 9h12.600M5 .9C3.700 5 3.700 9 5 13.100M9 .9c1.300 4.100 1.300 8.100 0 12.200" stroke="#b8b8b8" strokeWidth=".9" />
          </Svg>
        </Cell>
        <Cell className="w-[19px] bg-[#4772b3]">
          <Svg w={14} h={14}>
            <circle cx="7" cy="7" r="6.800" fill="#dde6f4" />
          </Svg>
        </Cell>
        <Cell className="w-[19px] bg-[#545454]">
          <Svg w={14} h={14}>
            <circle cx="7" cy="7" r="6.300" stroke="#b8b8b8" />
            <path d="M7 7V.7A6.300 6.300 0 0 0 .7 7ZM7 7v6.300A6.300 6.300 0 0 0 13.300 7C13.300 4 11 1 9 1c2 2 2 4-2 6Z" fill="#b8b8b8" />
          </Svg>
        </Cell>
        <Cell className="w-[19px] border-l border-[#464646] bg-[#545454]">
          <Svg w={14} h={14}>
            <circle cx="7" cy="7" r="6.300" stroke="#b8b8b8" />
            <circle cx="7" cy="7" r="4.500" stroke="#8f8f8f" />
            <path d="M3 7a4 4 0 0 1 4-4" stroke="#d8d8d8" strokeWidth="1.300" />
          </Svg>
        </Cell>
        <Cell className="grow">
          <Chevron />
        </Cell>
      </Btn>
    </div>
  );
}

function ToolStrip() {
  return (
    <div className="flex h-[24px] items-start justify-between">
      <div className="flex h-full w-[146px] items-start rounded-br-[4px] bg-[#333] pt-[1px]">
        <Svg w={22} h={20} className="ml-[12px]">
          <rect x="1.500" y=".8" width="18.500" height="18.500" rx="1" stroke="#dd9a2c" strokeWidth="1.200" strokeDasharray="3.500 1.500" />
          <path d="M8 4.800v10.500l2.600-2.500 4.400-.4Z" fill="#ececec" />
        </Svg>
        <div className="ml-[8px] flex h-[19px] overflow-hidden rounded-[3px] border border-[#3f3f3f] bg-[#3f3f3f]">
          <Cell className="w-[18px] bg-[#4772b3]">
            <Svg w={14} h={14}>
              <rect x=".6" y=".6" width="12.800" height="12.800" stroke="#fff" strokeWidth="1" strokeDasharray="2 1.200" />
            </Svg>
          </Cell>
          <Cell className="ml-[1px] w-[18px] bg-[#545454]">
            <Svg w={14} h={14}>
              <path d="M4.500 0H14v9.500H9.500V14H0V4.500h4.500Z" fill="#c4c4c4" />
            </Svg>
          </Cell>
          <Cell className="ml-[1px] w-[18px] bg-[#545454]">
            <Svg w={14} h={14}>
              <path d="M4.500 0H14v9.500H9.500V4.500h-5Z" fill="#c4c4c4" />
              <path d="M3.500 5H.6v8.400H9v-3" stroke="#c4c4c4" strokeDasharray="2 1.200" />
            </Svg>
          </Cell>
          <Cell className="ml-[1px] w-[18px] bg-[#545454]">
            <Svg w={14} h={14}>
              <path fillRule="evenodd" d="M4.500 0H14v9.500H9.500V14H0V4.500h4.500ZM4.500 4.500v5h5v-5Z" fill="#c4c4c4" />
              <path d="M4.500 4.500h5v5h-5Z" fill="#3c3c3c" />
            </Svg>
          </Cell>
          <Cell className="ml-[1px] w-[18px] bg-[#545454]">
            <Svg w={14} h={14}>
              <path d="M4.500 3.500V.6h8.900v8.900h-2.900M3.500 4.500H.6v8.900h8.900v-2.900" stroke="#c4c4c4" strokeDasharray="2 1.200" />
              <path d="M4.200 4.200h5.600v5.600H4.200Z" fill="#c4c4c4" />
            </Svg>
          </Cell>
        </div>
      </div>
      <div className="flex h-full w-[81px] justify-end rounded-bl-[4px] bg-[#333] pt-[1px] pr-[6px]">
        <Btn className="w-[67px] justify-between pr-[2px] pl-[7px]">
          <span>Options</span>
          <Chevron />
        </Btn>
      </div>
    </div>
  );
}

const EdgeTabs = ({ top }: { top: string }) => (
  <>
    <div className={`absolute left-0 flex h-[13px] w-[6px] items-center justify-start rounded-r-[3px] bg-[#1c1c1c]/50 ${top}`}>
      <Svg w={5} h={8}>
        <path d="m.5 1 3 3-3 3" stroke="#b8b8b8" strokeWidth="1" />
      </Svg>
    </div>
    <div className={`absolute right-0 flex h-[13px] w-[8px] items-center justify-end rounded-l-[3px] bg-[#1c1c1c]/50 ${top}`}>
      <Svg w={6} h={8}>
        <path d="m4.500 1-3 3 3 3" stroke="#c8c8c8" strokeWidth="1" />
      </Svg>
    </div>
  </>
);

function EditorHeader() {
  return (
    <div className="relative z-10 flex h-[24px] items-center">
      <Btn className="ml-[6px] w-[32px] justify-center gap-[2px]">
        <NodesIcon />
        <Chevron />
      </Btn>
      <Btn className="ml-[5px] w-[79px] justify-between pr-[2px] pl-[7px]">
        <span>Modifier</span>
        <Chevron />
      </Btn>
      <div className="ml-[12px] w-[41px]">View</div>
      <div className="w-[47px]">Select</div>
      <div className="w-[37px]">Add</div>
      <div className="w-[270px]">Node</div>
      <Btn className="w-[196px]">
        <Cell className="w-[31px] gap-[2px] border-r border-[#3d3d3d]">
          <TreeIcon w={15} />
          <Chevron />
        </Cell>
        <div className="flex h-full grow items-center bg-[#1d1d1d] pl-[7px]">geo rock 3</div>
        <Cell className="w-[24px] bg-[#545454]">2</Cell>
        <Cell className="w-[20px] border-l border-[#3d3d3d] bg-[#545454]">
          <ShieldIcon />
        </Cell>
        <Cell className="w-[20px] border-l border-[#3d3d3d] bg-[#545454]">
          <Svg w={14} h={14}>
            <path d="M5 .7h5l3.300 3.300v6.300H5Z" stroke="#e8e8e8" strokeWidth="1.200" strokeLinejoin="round" />
            <path d="M9.500.7v4h4Z" fill="#e8e8e8" />
            <path d="M3 4.200H.7v9.100h8.600V12" stroke="#c0c0c0" strokeWidth="1.100" />
          </Svg>
        </Cell>
        <Cell className="w-[20px] border-l border-[#3d3d3d] bg-[#545454]">
          <Svg w={9} h={9}>
            <path d="m.8.8 7.400 7.400M8.200.8.800 8.200" stroke="#dcdcdc" strokeWidth="1.100" />
          </Svg>
        </Cell>
      </Btn>
      <Svg w={14} h={14} className="ml-[8px]">
        <path d="M8.500.8 13.200 5.500 11.500 5.800 9 8.300l.2 2.400-.9.900L2.400 5.700l.9-.9 2.400.2 2.500-2.500ZM5.300 8.700.8 13.200" stroke="#a4a4a4" strokeWidth="1" strokeLinejoin="round" />
      </Svg>
      <div className="grow" />
      <Btn className="w-[20px] justify-center bg-[#545454]">
        <MagnetIcon />
      </Btn>
      <Btn className="mr-[6px] ml-[6px] w-[40px]">
        <Cell className="w-[19px] bg-[#4772b3]">
          <OverlayIcon />
        </Cell>
        <Cell className="grow">
          <Chevron />
        </Cell>
      </Btn>
    </div>
  );
}

const Crumb = () => (
  <Svg w={7} h={10}>
    <path d="m1.500 1.200 4 3.800-4 3.800" stroke="#d0d0d0" strokeWidth="1.200" />
  </Svg>
);

export default function App() {
  return (
    <div className="flex h-[970px] w-[1307px] flex-col gap-[3px] overflow-hidden bg-[#161616] pt-[2px] pr-[2px] pb-[1px] pl-[1px] font-['Inter','Liberation_Sans',sans-serif] text-[11px] leading-[14px] text-[#dadada]">
      <section className="relative h-[388px] shrink-0 overflow-hidden rounded-[6px] border border-[#4a4a4a] bg-[#3b3b3b]">
        <ViewportHeader />
        <ToolStrip />
        <EdgeTabs top="top-[65px]" />
        <div className="flex flex-col gap-[4px] pt-[9px] pl-[8px] font-medium text-white [text-shadow:0_0_2px_#000,0_1px_2px_#000]">
          <div>User Perspective</div>
          <div>(0) Scene Collection | Geo Rock 3 (Viewer)</div>
        </div>
        <Rock />
        <AxisGizmo />
        <NavButtons />
        <div className="absolute top-[179px] left-[2px]">
          <Round>
            <Svg w={14} h={13}>
              <rect x=".7" y=".7" width="12.600" height="11.600" stroke="#dcdcdc" strokeWidth="1.200" />
              <path d="M5 .7v11.600" stroke="#dcdcdc" strokeWidth="1.200" />
              <path d="M7 3h2v2H7ZM9 5h2v2H9ZM7 7h2v2H7ZM9 9h2v2H9ZM11 3h1.500v2H11ZM11 7h1.500v2H11ZM2 3h2v1.500H2ZM2 6h2v1.500H2Z" fill="#dcdcdc" />
            </Svg>
          </Round>
        </div>
      </section>

      <section className="relative grow overflow-hidden rounded-[6px] border border-[#3d3d3d] bg-[#1d1d1d]">
        <NodeCanvas />
        <EditorHeader />
        <EdgeTabs top="top-[39px]" />
        <div className="relative z-10 flex items-center pt-[15px] pl-[17px]">
          <ObjectIcon />
          <span className="w-[85px] pl-[9px]">Geo Rock 3</span>
          <Crumb />
          <div className="w-[9px]" />
          <NodesIcon />
          <span className="w-[109px] pl-[8px]">GeometryNodes</span>
          <Crumb />
          <div className="w-[9px]" />
          <TreeIcon w={15} />
          <span className="-ml-[2px] w-[8px] self-end text-[9px] leading-[8px]">2</span>
          <span className="pl-[2px]">geo rock 3</span>
        </div>
      </section>
    </div>
  );
}
